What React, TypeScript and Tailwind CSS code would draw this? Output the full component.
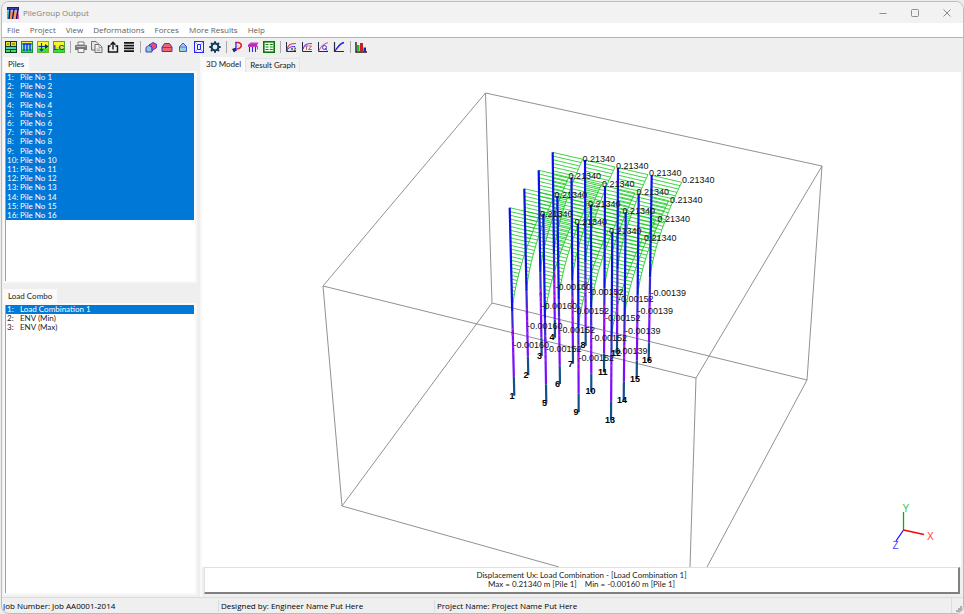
import { useState } from "react";
import type { ReactNode } from "react";
import clsx from "clsx";

const menuItems = ["File", "Project", "View", "Deformations", "Forces", "More Results", "Help"];

const piles = Array.from({ length: 16 }, (_, i) => `Pile No ${i + 1}`);
const combos = ["Load Combination 1", "ENV (Min)", "ENV (Max)"];

const MAX_LABEL = "0.21340";

type Point = [number, number];

type Pile = {
  top: Point;
  bottom: Point;
  max: Point;
  min: Point;
  minText: string;
  tag: Point;
};

// head, toe, label of max, label of min, value of min, number
const pile = (top: Point, bottom: Point, max: Point, min: Point, minText: string, tag: Point): Pile => ({
  top,
  bottom,
  max,
  min,
  minText,
  tag,
});

const pileData: Pile[] = [
  pile([509.7, 207.7], [514.3, 395.7], [540, 217], [513.5, 348], "-0.00160", [509.5, 398.5]),
  pile([524.3, 188.7], [528.3, 375.3], [554.5, 198], [527, 328.5], "-0.00160", [523.5, 378]),
  pile([538.7, 170.3], [541.7, 356], [568.5, 179], [541.5, 309], "-0.00160", [537, 359]),
  pile([552.7, 152.3], [555, 337.7], [582.5, 161.5], [555.5, 290], "-0.00160", [549.5, 340]),
  pile([543.3, 213.7], [546.3, 403.3], [574.5, 225], [546, 352], "-0.00152", [542, 406]),
  pile([557.3, 196], [560, 384], [588, 206.5], [559.5, 332.5], "-0.00152", [555, 386.5]),
  pile([571.5, 177.5], [573, 363.7], [602, 187], [573.5, 313.5], "-0.00152", [568, 366.5]),
  pile([585, 160], [585.7, 345.7], [616, 168.5], [588, 294.5], "-0.00152", [580.5, 347.5]),
  pile([578, 224], [578.7, 412.3], [609, 233.5], [578.5, 360.5], "-0.00152", [573.5, 414.5]),
  pile([591, 204.7], [591.3, 392], [622.5, 213.5], [591.5, 341], "-0.00152", [585.5, 394]),
  pile([605, 186], [604, 372.3], [636.5, 194.5], [605, 321], "-0.00152", [598, 374.5]),
  pile([618, 167.7], [617, 353.3], [649, 175.5], [618, 301.5], "-0.00152", [611, 355.5]),
  pile([612.3, 232.3], [611, 420.7], [644, 241], [612, 354], "-0.00139", [605, 423]),
  pile([625.7, 212.3], [623.7, 400.7], [657.5, 221.5], [625, 333.5], "-0.00139", [617, 403]),
  pile([638.7, 193.7], [636.7, 379], [670, 202.5], [637.5, 314], "-0.00139", [630, 382]),
  pile([651.7, 175.3], [648.7, 361], [682, 183], [650.5, 295.5], "-0.00139", [642, 363]),
];

const boxEdges = [
  "M485.5 93L822 166L696 378L323 286Z",
  "M485.5 93L492 303L807 380L822 166",
  "M323 286L342 506L492 303",
  "M342 506L559 567",
  "M696 378L690 567",
  "M807 380L707 567",
];

const along = (p: Pile, t: number): Point => [
  p.top[0] + (p.bottom[0] - p.top[0]) * t,
  p.top[1] + (p.bottom[1] - p.top[1]) * t,
];

const STEPS = 28;

function displacement(p: Pile) {
  let rungs = "";
  let edge = "";
  for (let i = 0; i <= STEPS; i++) {
    const t = i * 0.02;
    const f = Math.pow(1 - i / STEPS, 1.45);
    const [x, y] = along(p, t);
    const ex = x + 30 * f;
    const ey = y + 7 * f;
    rungs += `M${x.toFixed(1)} ${y.toFixed(1)}L${ex.toFixed(1)} ${ey.toFixed(1)}`;
    edge += `${i ? "L" : "M"}${ex.toFixed(1)} ${ey.toFixed(1)}`;
  }
  return rungs + edge;
}

const segment = (p: Pile, from: number, to: number) => {
  const a = along(p, from);
  const b = along(p, to);
  return `M${a[0]} ${a[1]}L${b[0]} ${b[1]}`;
};

const Model = () => (
  <svg viewBox="202 72 759 495" className="block h-full w-full" role="img" aria-label="3D Model">
    <g fill="none" stroke="#848484" strokeWidth="0.9">
      {boxEdges.map((d) => (
        <path key={d} d={d} />
      ))}
    </g>
    <g fill="none" stroke="#0ac814" strokeWidth="0.8">
      {pileData.map((p, i) => (
        <path key={i} d={displacement(p)} />
      ))}
    </g>
    <g fill="none" strokeWidth="2.2">
      {pileData.map((p, i) => (
        <g key={i}>
          <path d={segment(p, 0, 0.55)} stroke="#0c0cf0" />
          <path d={segment(p, 0.06, 0.66)} stroke="#0a3c9c" strokeWidth="1" strokeDasharray="1 3" />
          <path d={segment(p, 0.55, 0.68)} stroke="#3c28d8" />
          <path d={segment(p, 0.66, 0.9)} stroke="#7a0cff" />
          <path d={segment(p, 0.64, 0.78)} stroke="#e020c8" strokeWidth="1" strokeDasharray="2 4" />
          <path d={segment(p, 0.9, 1)} stroke="#14508c" />
        </g>
      ))}
    </g>
    <g fontFamily="'Liberation Sans', Arial, sans-serif" fontSize="9" fill="#111111">
      {pileData.map((p, i) => (
        <g key={i}>
          <text x={p.max[0]} y={p.max[1]}>
            {MAX_LABEL}
          </text>
          <text x={p.min[0]} y={p.min[1]}>
            {p.minText}
          </text>
          <text x={p.tag[0]} y={p.tag[1]} fontWeight="bold" fill="#000000">
            {i + 1}
          </text>
        </g>
      ))}
    </g>
    {/* axes */}
    <g fill="none" strokeWidth="1.3">
      <path d="M903.5 530V512" stroke="#00b400" />
      <path d="M903.5 530L924 534.5" stroke="#ff0000" />
      <path d="M903.5 530L896 541" stroke="#1414ff" />
    </g>
    <g fontFamily="'Liberation Sans', Arial, sans-serif" fontSize="10">
      <text x="902.5" y="511.5" fill="#3cc83c">
        Y
      </text>
      <text x="927" y="540" fill="#ff3c3c">
        X
      </text>
      <text x="892.5" y="548.5" fill="#4646ff">
        Z
      </text>
    </g>
  </svg>
);

const Icon = ({ children }: { children: ReactNode }) => (
  <svg viewBox="0 0 12 12" className="h-3 w-3" fill="none" aria-hidden="true">
    {children}
  </svg>
);

const AppLogo = () => (
  <Icon>
    <rect width="12" height="12" fill="#b4b8e8" />
    <path d="M0 4h3v8H0z" fill="#28c8d8" />
    <path d="M3 5h3v7H3z" fill="#f08c50" />
    <path d="M7 5h3v7H7z" fill="#f0a064" />
    <path d="M9 7h3v5H9z" fill="#e65aa0" />
    <path d="M0 0h12v3H0z" fill="#202078" />
    <path d="M1 2h10" stroke="#5a5ae6" />
    <path d="M3 2L2 12M7 2L5.5 12M11 2L9.5 12" stroke="#14146e" strokeWidth="1.4" />
  </Icon>
);

const toolGroups: { name: string; art: ReactNode }[][] = [
  [
    {
      name: "Soil layers",
      art: (
        <>
          <rect width="12" height="12" fill="#0a3c28" />
          <path d="M1 1h4v4H1zM6 1h5v4H6z" fill="#f0dc14" />
          <path d="M1 6h10v2H1z" fill="#46d2be" />
          <path d="M1 9h4v2H1zM6 9h5v2H6z" fill="#3ce650" />
          <path d="M2 3h2M7 3h3" stroke="#6e6414" />
        </>
      ),
    },
    {
      name: "Pile types",
      art: (
        <>
          <rect x="0.5" y="0.5" width="11" height="11" fill="#78e6c8" stroke="#1e8c3c" />
          <path d="M1 8h10v3H1z" fill="#1ee61e" />
          <path d="M1 1h10v1H1z" fill="#f0f03c" />
          <path d="M1.5 3h9" stroke="#1428e6" strokeWidth="1.5" />
          <path d="M3 3v7M6 3v7M9 3v7" stroke="#1428e6" strokeWidth="1.3" />
        </>
      ),
    },
    {
      name: "Loads",
      art: (
        <>
          <rect x="0.5" y="0.5" width="11" height="11" fill="#b4f01e" stroke="#78b428" />
          <path d="M1 1h10v3.5H1z" fill="#fafa28" />
          <path d="M1 7.5h10V11H1z" fill="#28e63c" />
          <path d="M1.5 5.5h7M4.5 2v8M2.8 8.2l1.7 1.8 1.7-1.8" stroke="#1432b4" strokeWidth="1.1" />
          <path d="M8 3l3.5 2.5L8 8z" fill="#0a2864" />
        </>
      ),
    },
    {
      name: "Load combinations",
      art: (
        <>
          <rect x="0.5" y="0.5" width="11" height="11" fill="#c8f01e" stroke="#50a03c" />
          <path d="M1 1h10v5H1z" fill="#f5f528" />
          <path d="M1 8h10v3H1z" fill="#28e63c" />
          <text x="0.5" y="9" fontFamily="'Liberation Sans', Arial, sans-serif" fontSize="8" fontWeight="bold" fill="#1432c8">
            LC
          </text>
        </>
      ),
    },
  ],
  [
    {
      name: "Print",
      art: (
        <>
          <path d="M3 1h6v3H3z" fill="#ffffff" stroke="#787878" />
          <path d="M1 4h10a1 1 0 0 1 1 1v4H0V5a1 1 0 0 1 1-1z" fill="#787878" />
          <path d="M1.5 5.5h9" stroke="#bebebe" />
          <path d="M3 7.5h6v4H3z" fill="#f5f5f5" stroke="#787878" />
        </>
      ),
    },
    {
      name: "Copy",
      art: (
        <>
          <path d="M0.5 0.5h4.5l2 2v6.5h-6.5z" fill="#e6e6e6" stroke="#6e6e6e" />
          <path d="M4 3.5h4.5l2.5 2.5v5.5H4z" fill="#f5f5f5" stroke="#6e6e6e" />
          <path d="M8 3.5V6.5h3M5.5 8h4M5.5 9.7h4" stroke="#8c8c8c" strokeWidth="0.8" />
        </>
      ),
    },
    {
      name: "Export",
      art: <path d="M3.5 5H1.5v6h9V5h-2M6 8.5V1.5M3.6 3.7L6 1.3l2.4 2.4" stroke="#141414" strokeWidth="1.4" />,
    },
    {
      name: "Tables",
      art: <path d="M1 1.8h10M1 4.6h10M1 7.4h10M1 10.2h10" stroke="#141414" strokeWidth="1.7" />,
    },
  ],
  [
    {
      name: "Isometric view",
      art: (
        <>
          <path d="M1 6.5l2.5-2 3.5 1v5.5H1z" fill="#8cc8dc" stroke="#3c3cdc" />
          <path d="M4 4L8 1.5l3.5 1.8v3.5L7 9.5V6z" fill="#e6506e" stroke="#3c3cdc" />
        </>
      ),
    },
    {
      name: "Front view",
      art: (
        <>
          <path d="M1 10.5V6l2.5-3.5h5L11 6v4.5z" fill="#f0646e" stroke="#3c3cc8" />
          <path d="M1 6.5h10" stroke="#b4285a" />
        </>
      ),
    },
    {
      name: "Side view",
      art: (
        <>
          <path d="M2.5 10.5V5.5L6 2l3.5 3.5v5z" fill="#96d2d2" stroke="#5050e6" />
          <path d="M2.5 6h7" stroke="#5050e6" strokeWidth="0.8" />
        </>
      ),
    },
    {
      name: "Top view",
      art: (
        <>
          <rect x="1.5" y="0.5" width="9" height="11" fill="#f0f0ff" stroke="#2828f0" />
          <rect x="4.5" y="3.5" width="3" height="5" stroke="#2828f0" />
          <path d="M2 1l2.5 2.5M10 1L7.5 3.5M2 11l2.5-2.5M10 11L7.5 8.5" stroke="#7878ff" strokeWidth="0.7" />
        </>
      ),
    },
    {
      name: "Settings",
      art: (
        <>
          <circle cx="6" cy="6" r="3.4" stroke="#0f3c5a" strokeWidth="2" />
          <path
            d="M6 0.3v2M6 9.7v2M0.3 6h2M9.7 6h2M2 2l1.4 1.4M8.6 8.6L10 10M10 2L8.6 3.4M3.4 8.6L2 10"
            stroke="#0f3c5a"
            strokeWidth="2"
          />
        </>
      ),
    },
  ],
  [
    {
      name: "Deformed shape",
      art: (
        <>
          <path d="M4.5 1.5H7c5 1 4 6-1 6.5" stroke="#e61e1e" strokeWidth="1.5" />
          <path d="M5 1v9" stroke="#2828e6" strokeWidth="1.3" />
          <path d="M5.5 4L8 5.5" stroke="#f0a0b4" />
          <path d="M1 8l4-1.5v3L3 11.5z" fill="#1e285a" />
        </>
      ),
    },
    {
      name: "Pile group",
      art: (
        <>
          <path d="M1 4l2.5-2.5H11.5L10 4.5V6H1z" fill="#c83cc8" />
          <path d="M1 4.2h9" stroke="#7828a0" strokeWidth="0.8" />
          <path d="M2.5 6v5M5.5 6v5M8.5 6v5" stroke="#2828f0" strokeWidth="1.1" />
          <path d="M10.5 5v3.5" stroke="#e63c78" />
        </>
      ),
    },
    {
      name: "Result table",
      art: (
        <>
          <rect x="0.8" y="0.8" width="10.4" height="10.4" fill="#f0fff0" stroke="#0a780a" strokeWidth="1.6" />
          <path d="M2.5 3.5h3M6.8 3.5h3M2.5 6h3M6.8 6h3M2.5 8.5h3M6.8 8.5h3" stroke="#148214" strokeWidth="1.1" />
        </>
      ),
    },
  ],
  [
    {
      name: "p-y curves",
      art: (
        <>
          <path d="M1.5 1v9.5H11" stroke="#28283c" />
          <path d="M2 8.5C3 4 5 2.500 11 2.5" stroke="#e63c50" strokeWidth="1.1" />
          <path d="M2 10c1-3 3-4.5 8-4.5" stroke="#2828e6" />
          <path d="M6 7l2 2.5M8 7L6 9.5M9 7h2L9 9.5h2" stroke="#3c3c50" strokeWidth="0.8" />
        </>
      ),
    },
    {
      name: "t-z curves",
      art: (
        <>
          <path d="M1.5 1v9.5H11" stroke="#28283c" />
          <path d="M2 8.5C3 4 5 2.5 11 2.5" stroke="#5050f0" strokeWidth="1.1" />
          <path d="M4 5h3M5.5 5v4M7.5 5h3l-3 3.5h3.3" stroke="#e65050" />
        </>
      ),
    },
    {
      name: "q-z curves",
      art: (
        <>
          <path d="M1.5 1v9.5H11" stroke="#28283c" />
          <path d="M2 9.5C4 5 6 3 11 1.5" stroke="#f050a0" strokeWidth="1.1" />
          <circle cx="7.5" cy="6.5" r="2" stroke="#3c3cf0" />
          <path d="M8 7l2 2.5" stroke="#3c3cf0" />
        </>
      ),
    },
    {
      name: "Load curve",
      art: (
        <>
          <path d="M1.5 1v9.5H11" stroke="#28283c" strokeWidth="1.2" />
          <path d="M2 9.5C4 9 5 3 11 1.5" stroke="#1e1ef0" strokeWidth="1.4" />
        </>
      ),
    },
  ],
  [
    {
      name: "Bar chart",
      art: (
        <>
          <path d="M1 1v10h11" stroke="#28141e" strokeWidth="1.4" />
          <path d="M2 4h2.5v6.5H2z" fill="#14c828" />
          <path d="M5 2h3v8.5H5z" fill="#c81e28" />
          <path d="M8.5 6.5H11v4H8.5z" fill="#1e1eb4" />
        </>
      ),
    },
  ],
];

const ListPanel = ({
  title,
  items,
  selected,
  onSelect,
  className,
  listClassName,
}: {
  title: string;
  items: string[];
  selected: number[];
  onSelect: (index: number) => void;
  className?: string;
  listClassName?: string;
}) => (
  <section className={clsx("flex flex-col", className)}>
    <h2 className="flex h-[14px] items-center self-start bg-[#fafafa] px-[5px] text-[8px] leading-[9px]">{title}</h2>
    <div className="flex flex-1 border border-[#f8f8f8] bg-[#f8f8f8] p-px">
      <div className="flex-1 border-l border-[#a0a0a0] bg-white pr-px">
        <ul role="listbox" aria-label={title} className={listClassName}>
          {items.map((item, i) => (
            <li
              key={item}
              role="option"
              aria-selected={selected.includes(i)}
              onClick={() => onSelect(i)}
              className={clsx(
                "flex items-center px-px text-[8px] leading-[9px] whitespace-nowrap",
                selected.includes(i) ? "bg-[#0078d7] text-white" : "text-[#1a1a1a]",
              )}
            >
              <span className="w-[13px]">{i + 1}:</span>
              {item}
            </li>
          ))}
        </ul>
      </div>
    </div>
  </section>
);

export default function App() {
  const [selectedPiles, setSelectedPiles] = useState(piles.map((_, i) => i));
  const [combo, setCombo] = useState(0);

  const togglePile = (i: number) =>
    setSelectedPiles((prev) => (prev.includes(i) ? prev.filter((p) => p !== i) : [...prev, i]));

  return (
    <div className="h-screen bg-[#ececec] pt-px pl-px font-[Lato,sans-serif] text-[#1a1a1a]">
      <div className="flex h-full flex-col overflow-hidden rounded-lg border border-[#bdbdbd] bg-[#efefef]">
        <header className="flex h-[21px] shrink-0 items-center bg-[#f2f2f2] pl-[5px] font-['Open_Sans',sans-serif]">
          <AppLogo />
          <h1 className="ml-1 flex-1 text-[8px] leading-3 text-[#808080]">PileGroup Output</h1>
          <button aria-label="Minimize" className="flex h-full w-8 items-center justify-center">
            <svg viewBox="0 0 8 8" className="h-2 w-2" stroke="#8c8c8c" fill="none">
              <path d="M0.5 4.5h7" />
            </svg>
          </button>
          <button aria-label="Maximize" className="flex h-full w-8 items-center justify-center">
            <svg viewBox="0 0 8 8" className="h-2 w-2" stroke="#8c8c8c" fill="none">
              <rect x="0.5" y="0.5" width="7" height="7" rx="1" />
            </svg>
          </button>
          <button aria-label="Close" className="flex h-full w-8 items-center justify-center">
            <svg viewBox="0 0 8 8" className="h-2 w-2" stroke="#8c8c8c" fill="none">
              <path d="M0.5 0.5l7 7M7.5 0.5l-7 7" />
            </svg>
          </button>
        </header>

        <nav className="flex h-[15px] shrink-0 items-center gap-[10px] border-b border-[#b4b4b4] bg-white pl-[5px] font-['Open_Sans',sans-serif] text-[8px] leading-3 text-[#606060]">
          {menuItems.map((item) => (
            <button key={item}>{item}</button>
          ))}
        </nav>

        <div role="toolbar" className="flex h-[17px] shrink-0 items-center pl-px">
          {toolGroups.map((group, g) => (
            <div key={g} className="flex items-center">
              {g > 0 && (
                <span className="flex w-[6px] justify-center">
                  <span className="h-3 w-px bg-[#a8a8a8]" />
                </span>
              )}
              {group.map((tool) => (
                <button key={tool.name} aria-label={tool.name} className="flex h-4 w-4 items-center justify-center">
                  <Icon>{tool.art}</Icon>
                </button>
              ))}
            </div>
          ))}
        </div>

        <main className="flex min-h-0 flex-1">
          <aside className="flex w-[198px] shrink-0 flex-col gap-[6px] pt-[2px] pr-[3px] pb-[2px] pl-px">
            <ListPanel
              title="Piles"
              items={piles}
              selected={selectedPiles}
              onSelect={togglePile}
              className="h-[226px] shrink-0"
              listClassName="grid h-[147px] auto-rows-fr"
            />
            <ListPanel title="Load Combo" items={combos} selected={[combo]} onSelect={setCombo} className="min-h-0 flex-1" />
          </aside>

          <section className="flex min-w-0 flex-1 flex-col border-l-2 border-[#f8f8f8] pt-[2px] pr-[2px] pb-[3px]">
            <div role="tablist" className="flex items-end text-[8px] leading-[9px]">
              <button role="tab" aria-selected="true" className="h-[15px] bg-[#fafafa] px-1">
                3D Model
              </button>
              <button role="tab" aria-selected="false" className="h-[14px] border border-b-0 border-[#e4e4e4] bg-[#f2f2f2] px-1">
                Result Graph
              </button>
            </div>
            <div className="min-h-0 flex-1 bg-white">
              <Model />
            </div>
            <div className="mr-px ml-[2px] flex h-[27px] shrink-0 flex-col items-center border-t border-r-2 border-b-2 border-l border-t-[#e0e0e0] border-r-[#808080] border-b-[#808080] border-l-[#e0e0e0] bg-white pt-[3px] text-[8px] leading-[9px]">
              <p>Displacement Ux: Load Combination - [Load Combination 1]</p>
              <p className="flex gap-2">
                <span>Max = 0.21340 m [Pile 1]</span>
                <span>Min = -0.00160 m [Pile 1]</span>
              </p>
            </div>
          </section>
        </main>

        <footer className="flex h-4 shrink-0 items-center border-t border-[#dcdcdc] font-['Open_Sans',sans-serif] text-[8px] leading-3 text-black">
          <p className="w-[216px] pl-px">Job Number: Job AA0001-2014</p>
          <p className="w-[216px] border-l border-[#dcdcdc] pl-[2px]">Designed by: Engineer Name Put Here</p>
          <p className="flex-1 border-l border-[#dcdcdc] pl-[2px]">Project Name: Project Name Put Here</p>
          <span className="flex h-full w-3 items-end justify-end border-l border-[#dcdcdc]">
            <svg viewBox="0 0 8 8" className="h-2 w-2" fill="#b0b0b0" aria-hidden="true">
              <path d="M5 1h2v2H5zM3 3h2v2H3zM5 3h2v2H5zM1 5h2v2H1zM3 5h2v2H3zM5 5h2v2H5z" />
            </svg>
          </span>
        </footer>
      </div>
    </div>
  );
}
